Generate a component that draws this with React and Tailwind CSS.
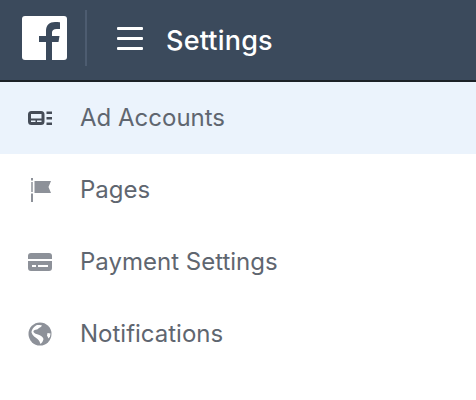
function FbLogo() {
  return (
    <svg width="45" height="44" viewBox="0 0 45 44">
      <rect width="45" height="44" rx="3" fill="#fff" />
      <path d="M24 44V26h-7v-6h7v-5c0-6 3.500-9 9-9 2 0 4 .2 5 .3V13h-3.500c-2.800 0-4.500 1.300-4.500 3.300V20h7.500l-1 6H30v18z" fill="#3b4a5c" />
    </svg>
  );
}

function AccountsIcon() {
  return (
    <svg width="26" height="18" viewBox="0 0 26 18" fill="#454c57">
      <path fillRule="evenodd" d="M3.500 2h9.500a3.500 3.500 0 0 1 3.500 3.500v7a3.500 3.500 0 0 1-3.500 3.500H3.500A3.500 3.500 0 0 1 0 12.500v-7A3.500 3.500 0 0 1 3.500 2zm-.5 3v4.500h10.500V5zm0 6.500V13h4.500v-1.500zm6 0V13h4.500v-1.500z" />
      <rect x="18.500" y="2.500" width="5.500" height="2.500" />
      <rect x="18.500" y="8" width="5.500" height="2.500" />
      <rect x="18.500" y="13.500" width="5.500" height="2.500" />
    </svg>
  );
}

function FlagIcon() {
  return (
    <svg width="24" height="26" viewBox="0 0 24 26" fill="#8d9199">
      <rect x="3" y="1" width="2" height="2.500" />
      <rect x="3" y="5" width="2" height="10" fill="#a9acb2" />
      <rect x="3" y="16.500" width="2" height="8.500" />
      <path d="M6.500 4H23l-2.500 6 2.500 6H6.500z" />
    </svg>
  );
}

function CardIcon() {
  return (
    <svg width="24" height="18" viewBox="0 0 24 18" fill="#8d9199">
      <path d="M3 0h18a3 3 0 0 1 3 3v3H0V3a3 3 0 0 1 3-3z" />
      <path fillRule="evenodd" d="M0 8h24v7a3 3 0 0 1-3 3H3a3 3 0 0 1-3-3zm4 4v2h4v-2zm6 0v2h10v-2z" />
    </svg>
  );
}

function GlobeIcon() {
  return (
    <svg width="24" height="24" viewBox="0 0 24 24">
      <circle cx="12" cy="12" r="11.500" fill="#8d9199" />
      <path d="M9 3c2 0 4-.5 5 .5-1 2-3 2-4 3.500-1 1-4 .5-4.500 2-.5 2 2.500 3 4.500 3.500 2.500.5 5 2.500 5.500 4.500-.5 2-1.500 4-3 5-1-2-1-3.500-3-5-2-1.500-5-3-6-6.500 0-3 3-6.500 5.500-7.500z" fill="#fff" />
      <path d="M19.500 11l3 .5-.5 3-1.500 2-1.500-3z" fill="#fff" />
    </svg>
  );
}

const items = [
  { label: "Ad Accounts", icon: <AccountsIcon />, active: true },
  { label: "Pages", icon: <FlagIcon /> },
  { label: "Payment Settings", icon: <CardIcon /> },
  { label: "Notifications", icon: <GlobeIcon /> },
];

export default function App() {
  return (
    <div className="w-[476px] h-[400px] bg-white font-['Inter',sans-serif] overflow-hidden">
      <header className="h-[82px] pb-[4px] bg-[#3b4a5c] border-b-2 border-[#1c2126] flex items-center">
        <div className="ml-[22px] w-[45px] h-[44px]">
          <FbLogo />
        </div>
        <div className="ml-[18px] w-[2px] h-[56px] bg-[#4d5c70]" />
        <div className="ml-[30px] w-[26px] flex flex-col gap-[7px]">
          <div className="h-[3px] rounded-[1px] bg-white" />
          <div className="h-[3px] rounded-[1px] bg-white" />
          <div className="h-[3px] rounded-[1px] bg-white" />
        </div>
        <span className="ml-[23px] mt-[6px] text-[27px] font-medium text-white tracking-[0.2px]">Settings</span>
      </header>
      <nav>
        {items.map((item) => (
          <div
            key={item.label}
            className={`h-[72px] flex items-center ${item.active ? "bg-[#ebf3fc]" : ""}`}
          >
            <div className="w-[80px] pl-[28px] flex items-center">{item.icon}</div>
            <span className="text-[24px] text-[#5f6670]">{item.label}</span>
          </div>
        ))}
      </nav>
    </div>
  );
}
